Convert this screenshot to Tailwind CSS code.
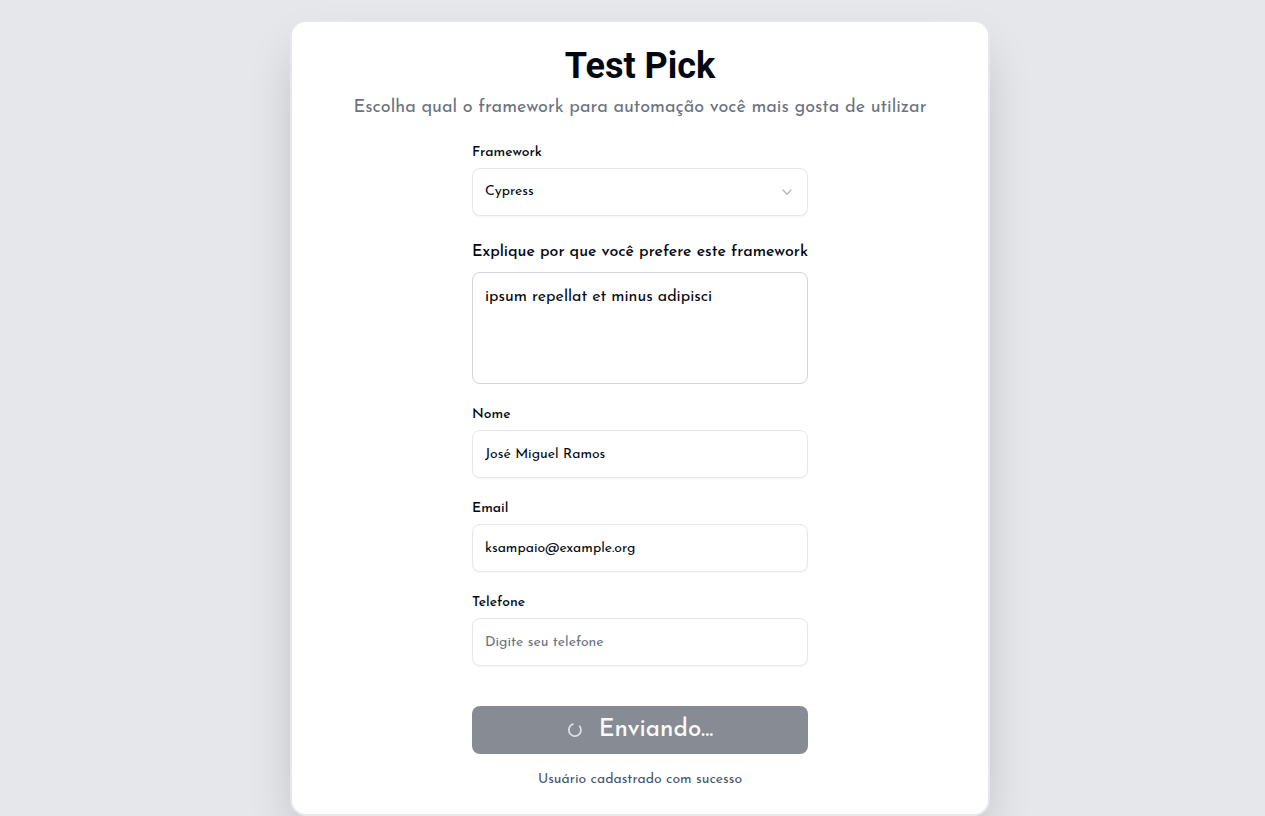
<!DOCTYPE html>
<html lang="pt-BR">
<head>
<meta charset="utf-8">
<meta name="viewport" content="width=device-width, initial-scale=1">
<title>Test Pick</title>
<script src="https://cdn.jsdelivr.net/npm/@tailwindcss/browser@4"></script>
</head>
<body class="min-h-screen bg-[#e5e7eb] pt-5 pl-[15px] font-['Josefin_Sans',Lato,sans-serif] text-[#030712]">
<main class="mx-auto w-full max-w-[700px] rounded-2xl border-2 border-[#e5e7eb] bg-white px-6 pt-6 pb-6 shadow-2xl">
  <header class="flex flex-col items-center gap-2 text-center">
    <h1 class="font-[Roboto,sans-serif] text-4xl leading-10 font-bold">Test Pick</h1>
    <p class="text-lg leading-7 text-[#6b7280]">Escolha qual o framework para automação você mais gosta de utilizar</p>
  </header>
  <form class="mx-auto mt-6 flex w-84 max-w-full flex-col gap-6">
    <div class="flex flex-col gap-2">
      <label for="framework" class="text-sm leading-none font-medium">Framework</label>
      <div class="relative">
        <select id="framework" class="h-12 w-full appearance-none rounded-lg border border-[#e5e7eb] bg-white px-3 pb-px text-sm shadow-xs">
          <option>Cypress</option>
          <option>Playwright</option>
        </select>
        <svg class="pointer-events-none absolute top-4 right-3 size-4" viewBox="0 0 16 16" fill="none" stroke="#b3b6bc" stroke-width="1.4" stroke-linecap="round" stroke-linejoin="round" aria-hidden="true"><path d="M3 6l4 4.200l4-4.200"/></svg>
      </div>
    </div>
    <div class="flex flex-col gap-2">
      <label for="motivo" class="text-base leading-6 font-medium whitespace-nowrap">Explique por que você prefere este framework</label>
      <textarea id="motivo" class="h-28 w-full resize-none rounded-lg border border-[#d1d5db] px-3 py-3 text-base leading-6">ipsum repellat et minus adipisci</textarea>
    </div>
    <div class="flex flex-col gap-2">
      <label for="nome" class="text-sm leading-none font-medium">Nome</label>
      <input id="nome" type="text" value="José Miguel Ramos" class="h-12 w-full rounded-lg border border-[#e5e7eb] px-3 text-sm shadow-xs">
    </div>
    <div class="flex flex-col gap-2">
      <label for="email" class="text-sm leading-none font-medium">Email</label>
      <input id="email" type="email" value="ksampaio@example.org" class="h-12 w-full rounded-lg border border-[#e5e7eb] px-3 text-sm shadow-xs">
    </div>
    <div class="flex flex-col gap-2">
      <label for="telefone" class="text-sm leading-none font-medium">Telefone</label>
      <input id="telefone" type="tel" placeholder="Digite seu telefone" class="h-12 w-full rounded-lg border border-[#e5e7eb] px-3 text-sm shadow-xs placeholder:text-[#6b7280]">
    </div>
    <div class="flex flex-col gap-4 pt-4">
      <button type="submit" disabled class="flex h-12 w-full items-center justify-center gap-4 rounded-lg bg-[#878b93] text-2xl font-medium text-[#fafafa]">
        <svg class="size-4" viewBox="0 0 16 16" fill="none" stroke="#dcdde0" stroke-width="1.800" stroke-linecap="round" aria-hidden="true"><path d="M5.900 2.200A6.100 6.100 0 1 0 12.700 4.200"/></svg>
        <span>Enviando...</span>
      </button>
      <p role="status" class="text-center text-sm leading-5 text-[#475569]">Usuário cadastrado com sucesso</p>
    </div>
  </form>
</main>
</body>
</html>
